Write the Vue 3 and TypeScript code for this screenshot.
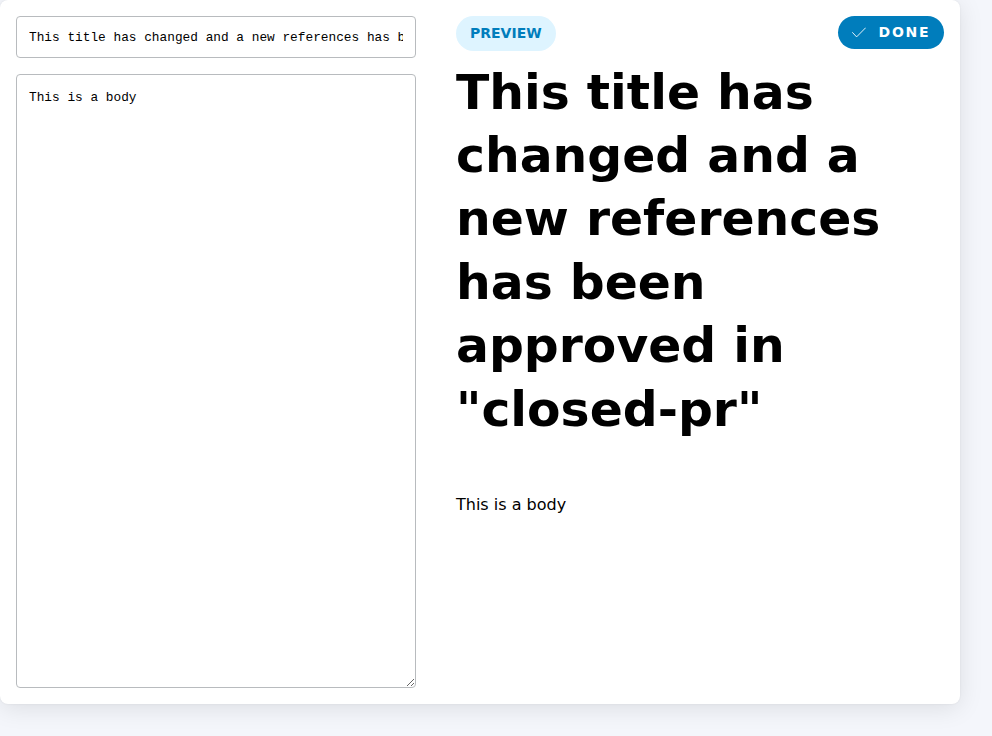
<script setup lang="ts">
import { ref } from 'vue'

const title = ref<string>('This title has changed and a new references has been approved in "closed-pr"')
const body = ref<string>('This is a body')
</script>

<template>
  <div class="page">
    <main class="card">
      <form class="editor" @submit.prevent>
        <input v-model="title" class="field title-field" type="text" />
        <textarea v-model="body" class="field body-field"></textarea>
      </form>
      <section class="preview">
        <header class="toolbar">
          <span class="tag">PREVIEW</span>
          <button class="done" type="button">
            <svg class="check" viewBox="0 0 14 14" aria-hidden="true">
              <path d="M0.3 6.3 4.6 10.9 13.7 1.7" />
            </svg>
            <span class="label">DONE</span>
          </button>
        </header>
        <h1 class="heading">{{ title }}</h1>
        <p class="text">{{ body }}</p>
      </section>
    </main>
  </div>
</template>

<style>
body {
  background: #f4f6fb;
}
</style>

<style scoped>
.page {
  box-sizing: border-box;
  min-height: 100vh;
  padding: 0 32px 32px 0;
  overflow: hidden;
  background: #f4f6fb;
}
.card {
  box-sizing: border-box;
  display: flex;
  gap: 40px;
  width: 960px;
  height: 704px;
  padding: 16px;
  background: #fff;
  border-radius: 8px;
  box-shadow: 0 4px 24px rgba(0, 0, 0, 0.1), 0 0 2px rgba(0, 0, 0, 0.08);
  font-family: "DejaVu Sans", sans-serif;
  color: #000;
}
.editor {
  display: flex;
  flex-direction: column;
  gap: 16px;
  width: 400px;
  flex: none;
}
.field {
  box-sizing: border-box;
  display: block;
  width: 100%;
  margin: 0;
  border: 1px solid #b8bbbe;
  border-radius: 4px;
  background: #fff;
  color: #000;
  font-family: "Liberation Mono", monospace;
  font-size: 12.8px;
  outline: none;
}
.title-field {
  height: 42px;
  padding: 0 12px;
}
.body-field {
  flex: 1;
  padding: 13px 12px 12px;
  line-height: 20px;
  resize: vertical;
}
.preview {
  flex: 1;
  min-width: 0;
}
.toolbar {
  display: flex;
  justify-content: space-between;
  align-items: flex-start;
  height: 44.6px;
}
.tag {
  box-sizing: border-box;
  height: 35px;
  padding: 0 14px;
  border-radius: 18px;
  background: #def4ff;
  color: #007dbc;
  font-size: 14px;
  font-weight: 700;
  line-height: 35px;
}
.done {
  display: flex;
  align-items: center;
  gap: 12.4px;
  height: 33px;
  padding: 0 13.6px 0 14px;
  border: 0;
  border-radius: 17px;
  background: #007dbc;
  color: #fff;
  font: 700 14px "DejaVu Sans", sans-serif;
  letter-spacing: 1.75px;
}
.label {
  padding-bottom: 2px;
}
.check {
  width: 14px;
  height: 14px;
  fill: none;
  stroke: currentColor;
  stroke-width: 0.9;
}
.heading {
  margin: 0;
  font-size: 48.8px;
  font-weight: 700;
  line-height: 63.44px;
}
.text {
  margin: 52px 0 0;
  font-size: 16px;
  line-height: 24px;
}
</style>
